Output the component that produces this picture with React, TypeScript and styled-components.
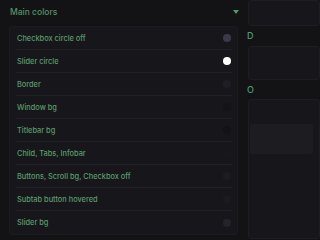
import React from "react";
import styled, { createGlobalStyle } from "styled-components";

interface ColorItem {
  label: string;
  color: string;
}

const mainColors: ColorItem[] = [
  { label: "Checkbox circle off", color: "#3a394c" },
  { label: "Slider circle", color: "#ffffff" },
  { label: "Border", color: "#1e1e24" },
  { label: "Window bg", color: "#141417" },
  { label: "Titlebar bg", color: "#131316" },
  { label: "Child, Tabs, Infobar", color: "#18181c" },
  { label: "Buttons, Scroll bg, Checkbox off", color: "#1c1c21" },
  { label: "Subtab button hovered", color: "#1a1a1f" },
  { label: "Slider bg", color: "#232329" },
];

const GlobalStyle = createGlobalStyle`
  html, body {
    margin: 0;
    padding: 0;
    height: 239px;
    background: #131316;
    overflow: hidden;
  }
  body {
    font-family: "Inter", "Noto Sans", sans-serif;
  }
`;

const App: React.FC = () => {
  return (
    <>
      <GlobalStyle />
      <Page>
        <Column>
          <SectionHeader>
            <HeaderTitle>Main colors</HeaderTitle>
            <svg width="6" height="4" viewBox="0 0 6 4">
              <path d="M0 0 H6 L3 4 Z" fill="#4f9a6c" />
            </svg>
          </SectionHeader>
          <Panel>
            {mainColors.map((item) => (
              <Row key={item.label}>
                <RowLabel>{item.label}</RowLabel>
                <Swatch color={item.color} />
              </Row>
            ))}
          </Panel>
        </Column>
        <SideColumn>
          <SideBox height={18} />
          <SideTitle>D</SideTitle>
          <SideBox height={34} />
          <SideTitle>O</SideTitle>
          <SideBox height={140}>
            <Field />
          </SideBox>
        </SideColumn>
      </Page>
    </>
  );
};

const Page = styled.div`
  display: grid;
  grid-template-columns: 229px minmax(0, 1fr);
  column-gap: 9px;
  padding-left: 9px;
  height: 239px;
  box-sizing: border-box;
  overflow: hidden;
`;

const Column = styled.div`
  display: flex;
  flex-direction: column;
`;

const SectionHeader = styled.div`
  height: 26px;
  display: flex;
  align-items: center;
  justify-content: space-between;
  padding: 0 0 2px 1px;
  box-sizing: border-box;

  svg {
    margin-right: -1px;
  }
`;

const HeaderTitle = styled.span`
  font-size: 8.5px;
  font-weight: 500;
  color: #56906a;
`;

const Panel = styled.div`
  background: #17171b;
  border: 1px solid #1b1b20;
  border-radius: 3px;
  padding: 0 5px;
`;

const Row = styled.div`
  height: 23px;
  display: flex;
  align-items: center;
  justify-content: space-between;
  padding: 0 1px 0 2px;
  border-bottom: 1px solid #1e1e24;
  box-sizing: border-box;

  &:last-child {
    border-bottom: none;
  }
`;

const RowLabel = styled.span`
  font-size: 7.4px;
  font-weight: 500;
  color: #5a9a6b;
`;

const Swatch = styled.span<{ color: string }>`
  width: 8px;
  height: 8px;
  border-radius: 50%;
  background: ${({ color }) => color};
`;

const SideColumn = styled.div`
  display: flex;
  flex-direction: column;
  min-width: 0;
  overflow: hidden;
`;

const SideBox = styled.div<{ height: number }>`
  height: ${({ height }) => height}px;
  flex-shrink: 0;
  margin-left: 1px;
  border: 1px solid #1d1d22;
  border-radius: 3px;
  background: #17171b;
  padding: 24px 6px 0 1px;
  box-sizing: border-box;
`;

const SideTitle = styled.div`
  height: 31px;
  display: flex;
  align-items: center;
  font-size: 9px;
  font-weight: 500;
  color: #4e9a70;
  white-space: nowrap;
`;

const Field = styled.div`
  height: 30px;
  background: #1c1c21;
  border-radius: 2px;
`;

export default App;
